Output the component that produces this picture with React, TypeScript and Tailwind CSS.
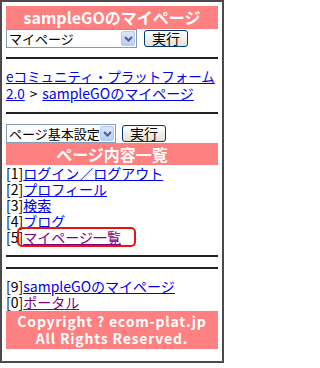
import React from 'react'

const jp = "font-['Noto_Sans_CJK_JP','Noto_Sans',sans-serif]"

function Chevron() {
  return (
    <svg width="9" height="6" viewBox="0 0 9 6" className="block">
      <path d="M1 1 L4.5 4.5 L8 1" fill="none" stroke="#4d6185" strokeWidth="2" />
    </svg>
  )
}

function FakeSelect({ label, width }: { label: string; width: string }) {
  return (
    <div className={`relative h-[19px] ${width} border border-[#7f9db9] bg-white`}>
      <span className="block pl-[2px] text-[13px] leading-[17px] text-black whitespace-nowrap overflow-hidden">
        {label}
      </span>
      <span className="absolute right-[1px] top-[1px] bottom-[1px] w-[14px] flex items-center justify-center rounded-[2px] border border-[#b6c9f3] bg-gradient-to-b from-[#dbe6fd] to-[#b9cdf8]">
        <Chevron />
      </span>
    </div>
  )
}

function RunButton() {
  return (
    <button className="h-[17px] w-[44px] rounded-[3px] border border-[#003c74] bg-gradient-to-b from-white to-[#e3e1d6] text-[14px] leading-[15px] text-black">
      実行
    </button>
  )
}

function Rule({ className = '' }: { className?: string }) {
  return <div className={`h-[2px] bg-[#222] ${className}`} />
}

const menu = [
  { key: '1', label: 'ログイン／ログアウト' },
  { key: '2', label: 'プロフィール' },
  { key: '3', label: '検索' },
  { key: '4', label: 'ブログ' },
]

export default function App() {
  return (
    <div className={`w-[224px] h-[363px] border-2 border-[#4a4a4a] bg-white px-[4px] pt-[4px] ${jp} text-black`}>
      <div className="h-[23px] bg-[#ff8080] text-center text-[16px] leading-[23px] text-white font-semibold">
        sampleGOのマイページ
      </div>

      <div className="flex h-[19px] items-center gap-[7px]">
        <FakeSelect label="マイページ" width="w-[131px]" />
        <RunButton />
      </div>

      <Rule className="mt-[9px]" />

      <div className="mt-[9px] text-[13.5px] leading-[17px]">
        <a href="#" className="text-[#0000ee] underline">eコミュニティ・プラットフォーム2.0</a>
        <span className="px-[2px]"> &gt; </span>
        <a href="#" className="text-[14px] text-[#0000ee] underline">sampleGOのマイページ</a>
      </div>

      <Rule className="mt-[10px]" />

      <div className="mt-[10px] flex h-[19px] items-center gap-[6px]">
        <FakeSelect label="ページ基本設定" width="w-[110px]" />
        <RunButton />
      </div>

      <div className="h-[22px] bg-[#ff8080] text-center text-[16px] leading-[22px] text-white font-semibold">
        ページ内容一覧
      </div>

      <div className="text-[14px] leading-[16px]">
        {menu.map((m) => (
          <div key={m.key}>
            [{m.key}]<a href="#" className="text-[#0000ee] underline">{m.label}</a>
          </div>
        ))}
        <div className="relative">
          [5]<a href="#" className="text-[#800080] underline">マイページ一覧</a>
          <span className="pointer-events-none absolute left-[11px] top-[-2px] h-[20px] w-[119px] rounded-[5px] border-2 border-[#ee1111]" />
        </div>
      </div>

      <Rule className="mt-[10px]" />
      <Rule className="mt-[10px]" />

      <div className="mt-[9px] text-[14px] leading-[16px]">
        <div>
          [9]<a href="#" className="text-[#0000ee] underline">sampleGOのマイページ</a>
        </div>
        <div>
          [0]<a href="#" className="text-[#800080] underline">ポータル</a>
        </div>
      </div>

      <div className="mt-[1px] h-[38px] bg-[#ff8080] py-[2px] text-center text-[14px] leading-[17px] tracking-[0.8px] text-white font-semibold">
        <div>Copyright ? ecom-plat.jp</div>
        <div>All Rights Reserved.</div>
      </div>
    </div>
  )
}
